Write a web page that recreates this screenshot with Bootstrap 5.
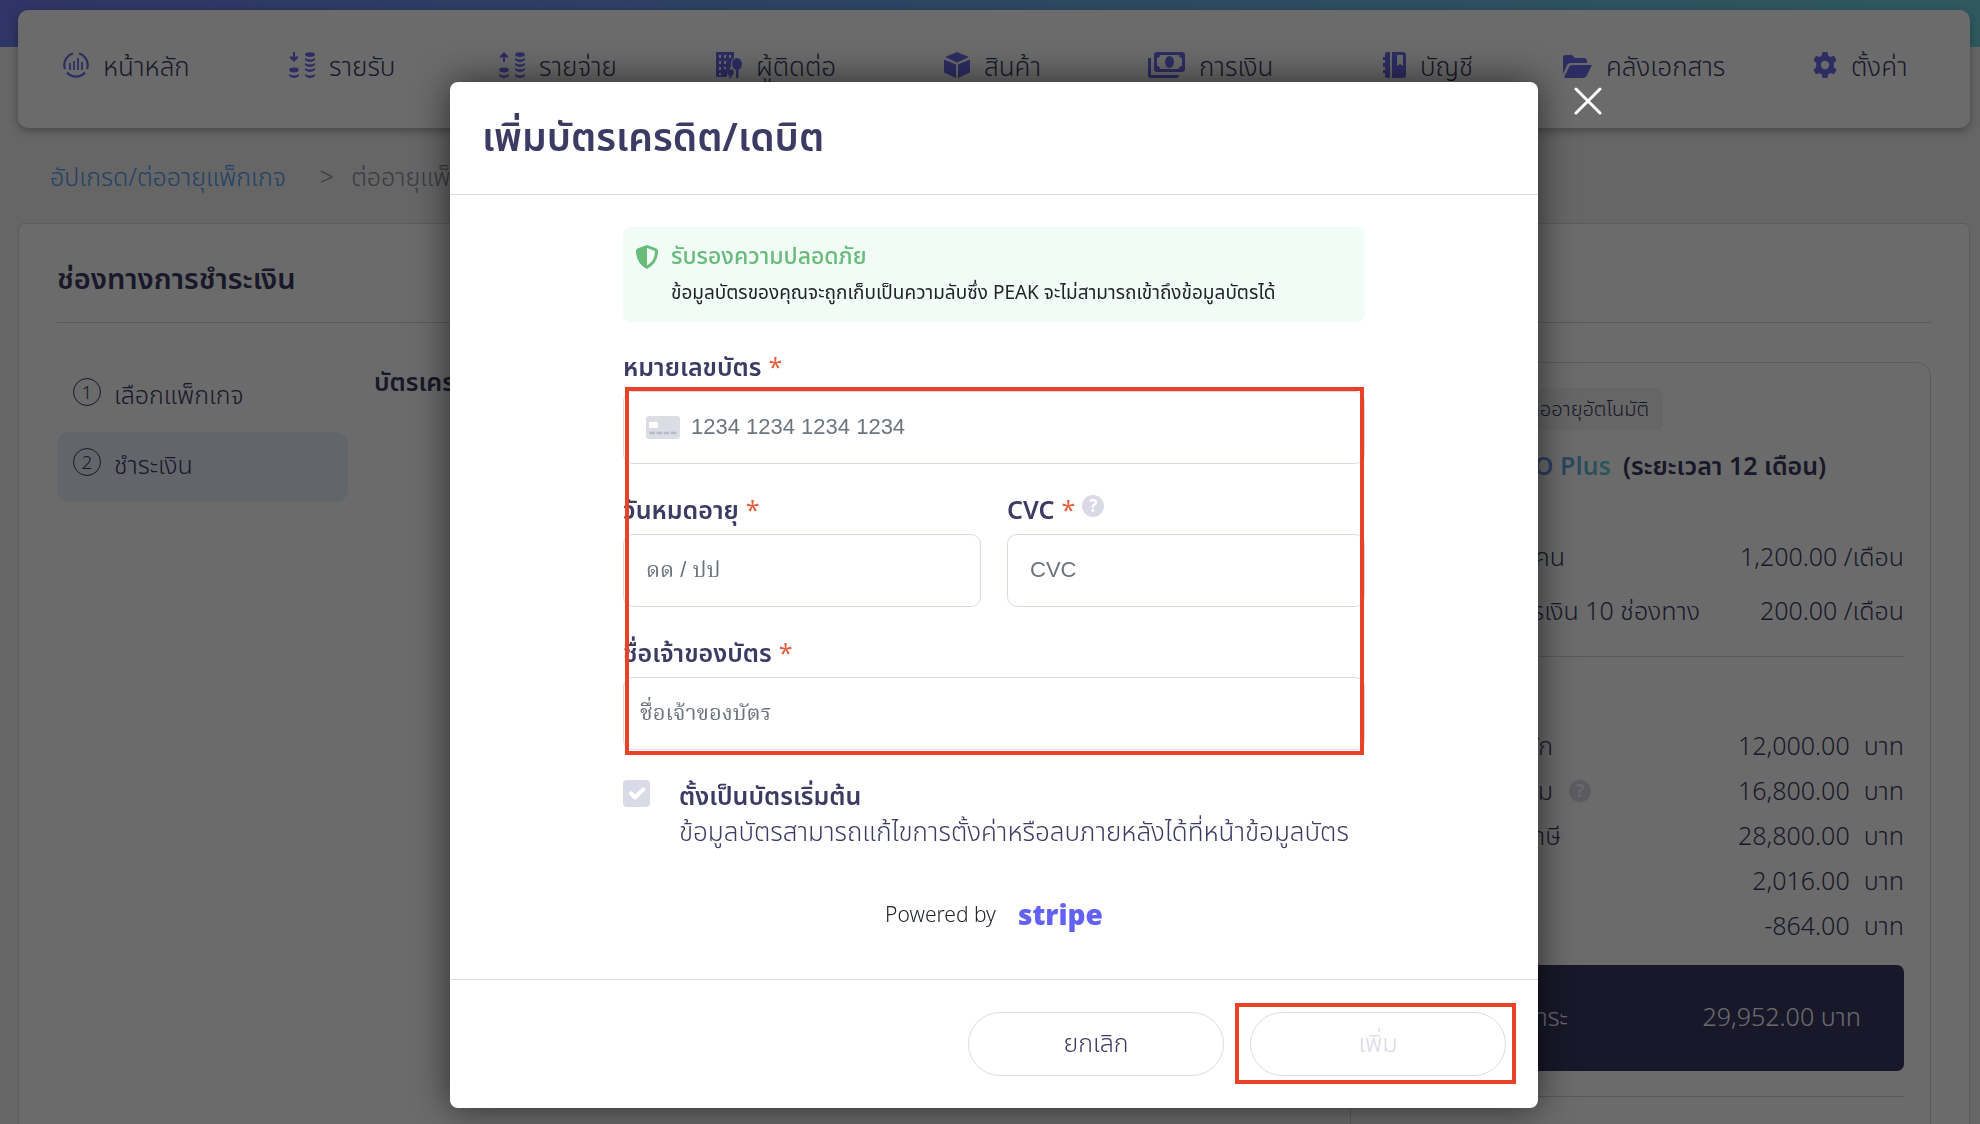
<!DOCTYPE html>
<html lang="th">
<head>
<meta charset="utf-8">
<meta name="viewport" content="width=device-width, initial-scale=1">
<title>เพิ่มบัตรเครดิต/เดบิต</title>
<link href="https://cdn.jsdelivr.net/npm/bootstrap@5.3.0/dist/css/bootstrap.min.css" rel="stylesheet">
<style>
:root{--ink:#3b3b64;--line:#dadae6;--brand:#6f6cec;--flag:#ea4228}
body{font-family:"Noto Sans","Noto Sans Thai",sans-serif;font-size:25px;line-height:36px;color:var(--ink);background:#f2f2f5;font-weight:300}
a{text-decoration:none}
.top-band{background:linear-gradient(100deg,#707ef3,#6ba4e9 45%,#70d4e2) no-repeat top/100% 47px;padding:10px 10px 0 18px}
.main-menu{display:grid;grid-template-columns:226fr 210fr 217fr 228fr 204fr 235fr 180fr 250fr 157fr;height:118px;background:#fff;border-radius:10px;box-shadow:0 3px 10px rgba(0,0,0,.3);padding:38px 0 0 45px}
.main-menu a{color:var(--ink);font-size:26px;display:flex;align-items:flex-start;gap:14px;height:36px;white-space:nowrap}
.main-menu svg{height:26px;margin-top:4px;fill:var(--brand);flex:none}
.trail{padding:30px 50px 29px}
.trail a{color:#4f9df0}
.trail span{color:#8d8d9b}
.trail .arrow{margin:0 17px 0 34px}
.sheet{background:#fff;border:1px solid #d9d9df;border-radius:6px;margin:0 10px 0 18px;padding:0 38px;min-height:930px}
.sheet h1{font-size:29px;font-weight:600;line-height:40px;padding:34px 0 24px;margin:0;border-bottom:1px solid #d4d4da}
.steps{width:291px;padding-top:39px}
.steps a{color:var(--ink);display:flex;gap:13px;height:70px;padding:14px 16px;border-radius:12px}
.steps a.current{background:#e9f2fd}
.step-no{width:28px;height:28px;border:1px solid var(--ink);border-radius:50%;font-size:19px;line-height:26px;text-align:center;margin-top:2px}
.pay-title{font-size:25px;line-height:36px;font-weight:600;margin:40px 0 0 26px}
.summary{width:581px;margin-top:39px;margin-left:auto;border:1px solid #d9d9df;border-radius:14px;padding:25px 26px;height:790px}
.auto-tag{display:block;width:286px;text-align:right;font-size:20px;line-height:42px;background:#f4f4f6;border-radius:6px;padding-right:14px}
.plan{font-weight:600;margin:17px 0 55px;display:flex;gap:12px}
.plan-name{background:linear-gradient(90deg,#6c7df2 60%,#63cfd6);-webkit-background-clip:text;background-clip:text;color:transparent;width:234px;text-align:right}
.fee{display:flex;justify-content:space-between;margin-bottom:18px;white-space:nowrap}
.fee-label{width:188px;text-align:right;white-space:nowrap}
.fee-label.wide{width:323px}
.sum-line{border-top:1px solid #d4d4da}
.fee+.sum-line{margin-top:28px}
.totals{padding-top:70px}
.totals div{display:flex;height:45px;white-space:nowrap}
.totals .name{width:176px;text-align:right}
.totals .name.long{width:184px}
.totals .name.short{width:163px}
.totals .baht{margin-left:14px}
.help{width:22px;height:22px;flex:none;border-radius:50%;background:var(--line);color:#fff;font-size:17px;font-weight:700;line-height:22px;text-align:center;display:inline-block}
.due{background:var(--ink);color:#fff;border-radius:7px;height:106px;padding:0 43px 4px 0;margin:13px 0 25px;display:flex;align-items:center;justify-content:space-between}
.due .name{width:191px;text-align:right}
.modal-backdrop.show{opacity:.58}
.pay-modal{padding-left:8px;overflow:hidden}
.pay-modal .modal-dialog{max-width:1088px;margin:82px auto 0}
.pay-modal .modal-content{border:0;border-radius:8px;color:var(--ink);box-shadow:0 0 36px rgba(0,0,0,.6)}
.pay-modal .modal-header{padding:30px 32px 34px;border-color:var(--line);height:113px}
.pay-modal .modal-title{font-size:39px;font-weight:600;line-height:48px}
.close-x{position:absolute;right:-64px;top:5px;width:28px;height:28px;border:0;padding:0;background:none;line-height:0}
.pay-modal .modal-body{padding:32px 173px 48px}
.secure{background:#f2fcf7;border-radius:8px;padding:10px 13px 11px;display:flex;gap:13px;color:#212529;font-size:19px;font-weight:400;line-height:37px;height:95px}
.secure svg{margin-top:8px;flex:none}
.secure b{display:block;color:#69bb7b;font-size:23px;font-weight:500}
.fields{position:relative;margin-top:26px}
.fields .form-label{font-weight:600;margin:0 0 7px;display:flex;gap:7px}
.req{color:#e2603e;font-weight:400}
.fields .form-label .help{margin-top:4px}
.fields .form-control{height:73px;border:1px solid var(--line);border-radius:10px;padding:0 22px 2px;font:22px/36px "Liberation Sans","Noto Serif Thai",sans-serif}
.fields .form-control::placeholder{color:#6c757d;opacity:1}
.fields .form-control.holder{padding-left:16px}
.fields .form-control.number{padding-left:67px}
.card-glyph{position:absolute;left:23px;top:25px}
.field-gap{margin-bottom:27px}
.card-row{display:grid;grid-template-columns:1fr 1fr;gap:26px}
.frame{position:absolute;border:4px solid var(--flag);pointer-events:none;z-index:2}
.frame-fields{inset:39px 1px -5px 2px}
.frame-submit{inset:-9px -10px -8px -15px}
.default-card{display:flex;gap:29px;margin-top:27px}
.default-card .form-check-input{width:27px;height:27px;margin:3px 0 0;border:0;border-radius:4px;background-color:var(--line);flex:none;opacity:1}
.default-card label{white-space:nowrap;opacity:1;font-size:26px}
.default-card b{display:block;font-size:25px;font-weight:600}
.powered{height:34px;margin-top:48px;font-size:21px;display:flex;justify-content:center;align-items:center;gap:22px;color:#212529}
.stripe-logo{font:800 28px/36px "Open Sans",sans-serif;color:#6461f6}
.pay-modal .modal-footer{padding:32px 32px;gap:26px;border-color:var(--line)}
.pay-modal .modal-footer>*{margin:0}
.btn-pill{width:256px;height:64px;border:1px solid var(--line);border-radius:32px;font-size:25px;font-weight:300;line-height:34px;padding:0 0 4px;color:var(--ink);background:#fff}
.btn-pill:disabled{color:var(--line);border-color:var(--line);opacity:1;background:#fff}
</style>
<script src="https://cdn.jsdelivr.net/npm/bootstrap@5.3.0/dist/js/bootstrap.bundle.min.js"></script>
</head>
<body class="overflow-hidden">
<header class="top-band">
  <nav class="main-menu">
    <a href="#"><svg width="26" viewBox="0 0 26 26"><g fill="none" stroke="#6f6cec" stroke-width="2.2"><path d="M10 1.5A12 12 0 0 0 2 17M16 1.5A12 12 0 0 1 24 17M4 20.5a12 12 0 0 0 18 0"/><path d="M7 11v7M11 9v9M15 6v12M19 10v8" stroke-width="1.8"/></g></svg>หน้าหลัก</a>
    <a href="#"><svg width="26" viewBox="0 0 26 26"><path d="M4 0h2v5l3-1v2L5 10 1 6V4l3 1z"/><ellipse cx="5" cy="18" rx="4.8" ry="2.4"/><path d="M0 22q5 3 10 0v2q-5 4-10 0z"/><ellipse cx="21" cy="2.6" rx="4.8" ry="2.4"/><path d="M16 6q5 3 10 0v2q-5 4-10 0zM16 11q5 3 10 0v2q-5 4-10 0zM16 16q5 3 10 0v2q-5 4-10 0zM16 22q5 3 10 0v2q-5 4-10 0z"/></svg>รายรับ</a>
    <a href="#"><svg width="26" viewBox="0 0 26 26"><path d="M4 10h2V5l3 1V4L5 0 1 4v2l3-1z"/><ellipse cx="5" cy="18" rx="4.8" ry="2.4"/><path d="M0 22q5 3 10 0v2q-5 4-10 0z"/><ellipse cx="21" cy="2.6" rx="4.8" ry="2.4"/><path d="M16 6q5 3 10 0v2q-5 4-10 0zM16 11q5 3 10 0v2q-5 4-10 0zM16 16q5 3 10 0v2q-5 4-10 0zM16 22q5 3 10 0v2q-5 4-10 0z"/></svg>รายจ่าย</a>
    <a href="#"><svg width="26" viewBox="0 0 26 26"><path fill-rule="evenodd" d="M0 0h18v6q-4 3-3 9l-4 5v5H0zM3 3v3h2V3zm5 0v3h2V3zm5 0v3h2V3zM3 9v3h2V9zm5 0v3h2V9zM3 15v3h2v-3zm5 0v2h2v-2zM3 21v2h2v-2z"/><ellipse cx="21" cy="12" rx="5" ry="6"/><path d="M20 15h2.400v11H20z"/><circle cx="14.5" cy="20.5" r="3.3"/><path d="M13.5 22h2v4h-2z"/></svg>ผู้ติดต่อ</a>
    <a href="#"><svg width="26" viewBox="0 0 26 26"><path d="M13 0l12 5-12 5.500L1 5zM0 7.500l12 5V26L0 20.500zM26 7.500l-12 5V26l12-5.500z"/></svg>สินค้า</a>
    <a href="#"><svg width="37" viewBox="0 0 37 26"><path fill-rule="evenodd" d="M9 0h25q3 0 3 3v14q0 3-3 3H9q-3 0-3-3V3q0-3 3-3zm3 3q0 3-3 3v8q3 0 3 3h19q0-3 3-3V6q-3 0-3-3z"/><ellipse cx="21.500" cy="10" rx="4.500" ry="6"/><path d="M0 6h3v17h28q0 3-3 3H3q-3 0-3-3z"/></svg>การเงิน</a>
    <a href="#"><svg width="23" viewBox="0 0 23 26"><path fill-rule="evenodd" d="M2 2q0-2 2-2h3v26H4q-2 0-2-2v-3H0v-3h2v-3H0v-4h2V8H0V5h2zM9 0h11q3 0 3 3v20q0 3-3 3H9zm5 3v11l3-2 3 2V3z"/></svg>บัญชี</a>
    <a href="#"><svg width="29" viewBox="0 0 29 26"><path d="M0 6q0-3 3-3h6l3 3h9q3 0 3 3v2H8q-3 0-4 2L0 22zM1 25l5-10q1-2 3-2h20l-5 10q-1 3-4 3H2z"/></svg>คลังเอกสาร</a>
    <a href="#"><svg width="24" viewBox="0 0 24 26"><path fill-rule="evenodd" d="M9.500 0h5l.7 3.600 2.300 1.300L21 3.700l2.500 4.400L20.800 11v4l2.700 2.900-2.500 4.400-3.500-1.200-2.300 1.300-.7 3.600h-5l-.7-3.600-2.300-1.300L3 22.300.5 17.900 3.200 15v-4L.5 8.100 3 3.700l3.500 1.200 2.300-1.300zM12 8.800a4.200 4.200 0 1 0 0 8.400 4.200 4.200 0 0 0 0-8.400z"/></svg>ตั้งค่า</a>
  </nav>
</header>
<nav class="trail d-flex"><a href="#">อัปเกรด/ต่ออายุแพ็กเกจ</a><span class="arrow">&gt;</span><span>ต่ออายุแพ็กเกจ</span></nav>
<main class="sheet">
  <h1>ช่องทางการชำระเงิน</h1>
  <div class="d-flex">
    <div class="steps">
      <a href="#"><span class="step-no">1</span><span>เลือกแพ็กเกจ</span></a>
      <a href="#" class="current"><span class="step-no">2</span><span>ชำระเงิน</span></a>
    </div>
    <h2 class="pay-title">บัตรเครดิต/เดบิต</h2>
    <section class="summary">
      <span class="auto-tag">ต่ออายุอัตโนมัติ</span>
      <div class="plan"><span class="plan-name">PRO Plus</span><span>(ระยะเวลา 12 เดือน)</span></div>
      <div class="fee"><span class="fee-label">จำนวนผู้ใช้ คน</span><span>1,200.00 /เดือน</span></div>
      <div class="fee"><span class="fee-label wide">การเงิน 10 ช่องทาง</span><span>200.00 /เดือน</span></div>
      <div class="sum-line"></div>
      <div class="totals">
        <div><span class="name">แพ็กเกจหลัก</span><span class="ms-auto">12,000.00</span><span class="baht">บาท</span></div>
        <div><span class="name">แพ็กเกจเสริม</span><span class="help ms-3 mt-2">?</span><span class="ms-auto">16,800.00</span><span class="baht">บาท</span></div>
        <div><span class="name long">มูลค่าก่อนภาษี</span><span class="ms-auto">28,800.00</span><span class="baht">บาท</span></div>
        <div><span>VAT 7%</span><span class="ms-auto">2,016.00</span><span class="baht">บาท</span></div>
        <div><span class="name short">หัก ณ ที่จ่าย</span><span class="ms-auto">-864.00</span><span class="baht">บาท</span></div>
      </div>
      <div class="due"><span class="name">ยอดชำระ</span><span>29,952.00 บาท</span></div>
      <div class="sum-line"></div>
    </section>
  </div>
</main>

<div class="modal-backdrop show"></div>
<div class="modal show d-block pay-modal" tabindex="-1" role="dialog" aria-labelledby="payTitle">
  <div class="modal-dialog">
    <form class="modal-content">
      <button type="button" class="close-x" aria-label="ปิด"><svg width="28" height="28" viewBox="0 0 28 28"><path d="M2 2l24 24M26 2L2 26" stroke="#fff" stroke-width="3" stroke-linecap="round"/></svg></button>
      <div class="modal-header"><h2 class="modal-title" id="payTitle">เพิ่มบัตรเครดิต/เดบิต</h2></div>
      <div class="modal-body">
        <div class="secure">
          <svg width="22" height="24" viewBox="0 0 22 24"><path fill="#69bb7b" fill-rule="evenodd" d="M11 0l9.500 3.500Q22 4 22 6q0 12-11 18Q0 18 0 6q0-2 1.500-2.500zm0 3v17.500Q19 16 19 6z"/></svg>
          <div><b>รับรองความปลอดภัย</b>ข้อมูลบัตรของคุณจะถูกเก็บเป็นความลับซึ่ง PEAK จะไม่สามารถเข้าถึงข้อมูลบัตรได้</div>
        </div>
        <div class="fields">
          <div class="field-gap">
            <label class="form-label" for="num">หมายเลขบัตร <span class="req">*</span></label>
            <div class="position-relative">
              <input class="form-control number" id="num" type="text" placeholder="1234 1234 1234 1234">
              <svg class="card-glyph" width="34" height="23" viewBox="0 0 34 23"><rect width="34" height="23" rx="3" fill="#dcdce4"/><rect x="3" y="6" width="9" height="6" rx="1" fill="#fff"/><path d="M3.500 17h27" stroke="#b9b9cb" stroke-width="2.500" stroke-dasharray="5.500 1.600"/></svg>
            </div>
          </div>
          <div class="card-row field-gap">
            <div>
              <label class="form-label" for="exp">วันหมดอายุ <span class="req">*</span></label>
              <input class="form-control" id="exp" type="text" placeholder="ดด / ปป">
            </div>
            <div>
              <label class="form-label" for="cvc">CVC <span class="req">*</span><span class="help">?</span></label>
              <input class="form-control" id="cvc" type="text" placeholder="CVC">
            </div>
          </div>
          <div>
            <label class="form-label" for="holder">ชื่อเจ้าของบัตร <span class="req">*</span></label>
            <input class="form-control holder" id="holder" type="text" placeholder="ชื่อเจ้าของบัตร">
          </div>
          <div class="frame frame-fields"></div>
        </div>
        <div class="default-card">
          <input class="form-check-input" id="def" type="checkbox" checked>
          <label for="def"><b>ตั้งเป็นบัตรเริ่มต้น</b>ข้อมูลบัตรสามารถแก้ไขการตั้งค่าหรือลบภายหลังได้ที่หน้าข้อมูลบัตร</label>
        </div>
        <div class="powered"><span>Powered by</span><span class="stripe-logo">stripe</span></div>
      </div>
      <div class="modal-footer">
        <button type="button" class="btn btn-pill">ยกเลิก</button>
        <div class="position-relative"><button type="submit" class="btn btn-pill" disabled>เพิ่ม</button><div class="frame frame-submit"></div></div>
      </div>
    </form>
  </div>
</div>
</body>
</html>
